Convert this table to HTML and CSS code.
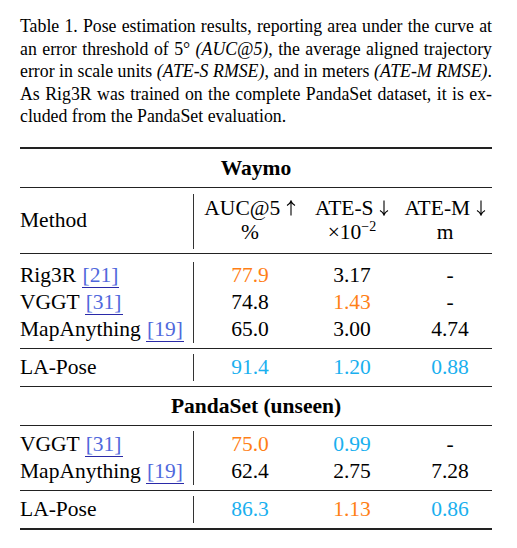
FILE: index.html
```html
<!DOCTYPE html>
<html lang="en">
<head>
    <meta charset="UTF-8">
    <meta name="viewport" content="width=device-width, initial-scale=1.0">
    <title>Table 1</title>
    <link rel="stylesheet" href="styles.css">
</head>
<body>

    <div class="paper-table">
        <p class="caption">
            <span class="line">Table 1. Pose estimation results, reporting area under the curve at</span>
            <span class="line">an error threshold of 5° <i>(AUC@5)</i>, the average aligned trajectory</span>
            <span class="line">error in scale units <i>(ATE-S RMSE)</i>, and in meters <i>(ATE-M RMSE)</i>.</span>
            <span class="line">As Rig3R was trained on the complete PandaSet dataset, it is ex-</span>
            <span class="line last">cluded from the PandaSet evaluation.</span>
        </p>

        <div class="results">
            <div class="rule thick"></div>
            <div class="group-title">Waymo</div>
            <div class="rule"></div>

            <div class="block head">
                <div class="m">Method</div>
                <div class="v">AUC@5 <svg class="arrow" viewBox="0 0 10 16"><path d="M5 15.5V1M1 5.5Q4 3.8 5 1Q6 3.8 9 5.5"/></svg><br>%</div>
                <div class="v">ATE-S <svg class="arrow" viewBox="0 0 10 16"><path d="M5 0.5V15M1 10.5Q4 12.2 5 15Q6 12.2 9 10.5"/></svg><br>×10<sup>−2</sup></div>
                <div class="v last-col">ATE-M <svg class="arrow" viewBox="0 0 10 16"><path d="M5 0.5V15M1 10.5Q4 12.2 5 15Q6 12.2 9 10.5"/></svg><br>m</div>
            </div>
            <div class="rule"></div>

            <div class="block first">
                <div class="m">Rig3R <span class="cite">[21]</span></div>
                <div class="v orange">77.9</div>
                <div class="v">3.17</div>
                <div class="v last-col">-</div>

                <div class="m">VGGT <span class="cite">[31]</span></div>
                <div class="v">74.8</div>
                <div class="v orange">1.43</div>
                <div class="v last-col">-</div>

                <div class="m">MapAnything <span class="cite">[19]</span></div>
                <div class="v">65.0</div>
                <div class="v">3.00</div>
                <div class="v last-col">4.74</div>
            </div>
            <div class="rule"></div>

            <div class="block ours">
                <div class="m">LA-Pose</div>
                <div class="v blue">91.4</div>
                <div class="v blue">1.20</div>
                <div class="v last-col blue">0.88</div>
            </div>
            <div class="rule"></div>

            <div class="group-title">PandaSet (unseen)</div>
            <div class="rule"></div>

            <div class="block">
                <div class="m">VGGT <span class="cite">[31]</span></div>
                <div class="v orange">75.0</div>
                <div class="v blue">0.99</div>
                <div class="v last-col">-</div>

                <div class="m">MapAnything <span class="cite">[19]</span></div>
                <div class="v">62.4</div>
                <div class="v">2.75</div>
                <div class="v last-col">7.28</div>
            </div>
            <div class="rule"></div>

            <div class="block ours">
                <div class="m">LA-Pose</div>
                <div class="v blue">86.3</div>
                <div class="v orange">1.13</div>
                <div class="v last-col blue">0.86</div>
            </div>
            <div class="rule thick"></div>
        </div>
    </div>

</body>
</html>
```

FILE: styles.css
```css
body {
    font-family: "Liberation Serif", "Times New Roman", serif;
    background-color: #fff;
    color: #000;
    margin: 0;
    padding: 0;
}

.paper-table {
    width: 472px;
    padding: 15px 0 0 20px;
}

.caption {
    margin: 0 0 19px;
    font-size: 17.8px;
    line-height: 22.6px;
}

.caption .line {
    display: block;
    text-align: justify;
    text-align-last: justify;
    white-space: nowrap;
}

.caption .line.last {
    text-align-last: left;
}

.results {
    font-size: 21.5px;
}

.rule {
    height: 1px;
    background-color: #222;
}

.rule.thick {
    height: 2px;
}

.group-title {
    text-align: center;
    font-weight: bold;
    line-height: 38px;
}

.block {
    display: grid;
    grid-template-columns: 174px 112px 92px 94px;
    line-height: 27px;
    margin: 5px 0 5px;
}

.block.head {
    line-height: 24px;
    margin: 6px 0 4px;
}

.block.head .m,
.block.head .v {
    padding: 2px 0 5px;
}

.block.head .m {
    display: flex;
    align-items: center;
}

.block.first {
    margin-top: 8px;
}

.block .m {
    border-right: 1px solid #333;
    white-space: nowrap;
}

.block .v {
    text-align: center;
    white-space: nowrap;
}

.block .last-col {
    padding-left: 10px;
}

.arrow {
    width: 10px;
    height: 16px;
    vertical-align: -1px;
    fill: none;
    stroke: #000;
    stroke-width: 1.1;
}

sup {
    font-size: 14px;
    line-height: 0;
    vertical-align: 8px;
}

.cite {
    color: #5068dc;
    border-bottom: 1.5px solid #2a2aa8;
    padding: 0 1px;
    line-height: 20px;
}

.orange {
    color: #ff7f16;
}

.blue {
    color: #1ab0ef;
}
```
